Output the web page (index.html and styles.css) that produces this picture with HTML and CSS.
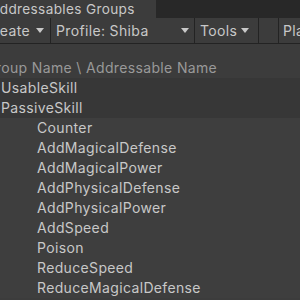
FILE: index.html
```html
<!DOCTYPE html>
<html>
<head>
<meta charset="utf-8">
<link rel="stylesheet" href="styles.css">
</head>
<body>
<div class="window">
  <div class="tabbar">
    <div class="tab"><span class="tab-title">Addressables Groups</span></div>
    <div class="tab-rest"></div>
  </div>
  <div class="toolbar">
    <div class="tb-btn tb-create"><span>Create</span><svg class="arrow" viewBox="0 0 8 5"><path d="M0 0H8L4 5Z"/></svg></div>
    <div class="tb-btn tb-profile"><span>Profile: Shiba</span><svg class="arrow" viewBox="0 0 8 5"><path d="M0 0H8L4 5Z"/></svg></div>
    <div class="tb-btn tb-tools"><span>Tools</span><svg class="arrow" viewBox="0 0 8 5"><path d="M0 0H8L4 5Z"/></svg></div>
    <div class="tb-btn tb-empty"></div>
    <div class="tb-btn tb-play"><span>Play Mode Script</span></div>
  </div>
  <div class="spacer"></div>
  <div class="header"><span class="header-text">Group Name \ Addressable Name</span></div>
  <div class="tree">
    <div class="row group">UsableSkill</div>
    <div class="row group">PassiveSkill</div>
    <div class="row child">Counter</div>
    <div class="row child">AddMagicalDefense</div>
    <div class="row child">AddMagicalPower</div>
    <div class="row child">AddPhysicalDefense</div>
    <div class="row child">AddPhysicalPower</div>
    <div class="row child">AddSpeed</div>
    <div class="row child">Poison</div>
    <div class="row child">ReduceSpeed</div>
    <div class="row child">ReduceMagicalDefense</div>
  </div>
</div>
</body>
</html>
```
FILE: styles.css
```css
html, body {
  margin: 0;
  padding: 0;
  background: #3c3c3c;
  overflow: hidden;
}
body {
  font-family: Inter, "Noto Sans", sans-serif;
  font-size: 14px;
  letter-spacing: 0.35px;
  color: #c8c8c8;
}
.window {
  width: 300px;
  height: 300px;
  overflow: hidden;
  display: flex;
  flex-direction: column;
}
.tabbar {
  display: flex;
  height: 18px;
  flex: none;
}
.tab {
  width: 156px;
  background: #3c3c3c;
  display: flex;
  align-items: center;
  overflow: hidden;
}
.tab-title {
  margin-left: -10px;
  white-space: nowrap;
  line-height: 18px;
  font-size: 13.6px;
}
.tab-rest {
  flex: 1;
  background: #282828;
}
.toolbar {
  display: flex;
  height: 25px;
  flex: none;
  background: #3c3c3c;
  border-bottom: 1px solid #232323;
}
.tb-btn {
  display: flex;
  align-items: center;
  border-right: 1px solid #232323;
  white-space: nowrap;
  overflow: hidden;
  flex: none;
  box-sizing: border-box;
}
.arrow {
  width: 8px;
  height: 5px;
  fill: #c8c8c8;
  flex: none;
}
.tb-create {
  width: 51px;
  justify-content: flex-end;
  padding-right: 6px;
  gap: 6px;
}
.tb-profile {
  width: 144px;
  padding: 0 5px;
  justify-content: space-between;
}
.tb-tools {
  width: 64px;
  padding: 0 5px;
  gap: 4px;
}
.tb-empty {
  width: 20px;
}
.tb-play {
  flex: 1;
  padding-left: 4px;
  border-right: none;
}
.spacer {
  height: 12px;
  flex: none;
  background: #3c3c3c;
}
.header {
  height: 22px;
  flex: none;
  display: flex;
  align-items: center;
  overflow: hidden;
  background: #3c3c3c;
}
.header-text {
  margin-left: -15px;
  white-space: nowrap;
  color: #999999;
}
.tree {
  flex: 1;
  display: flex;
  flex-direction: column;
}
.row {
  height: 20px;
  line-height: 20px;
  white-space: nowrap;
  flex: none;
}
.group {
  background: #373737;
  padding-left: 1px;
}
.child {
  background: #3e3e3e;
  padding-left: 37px;
}
```
